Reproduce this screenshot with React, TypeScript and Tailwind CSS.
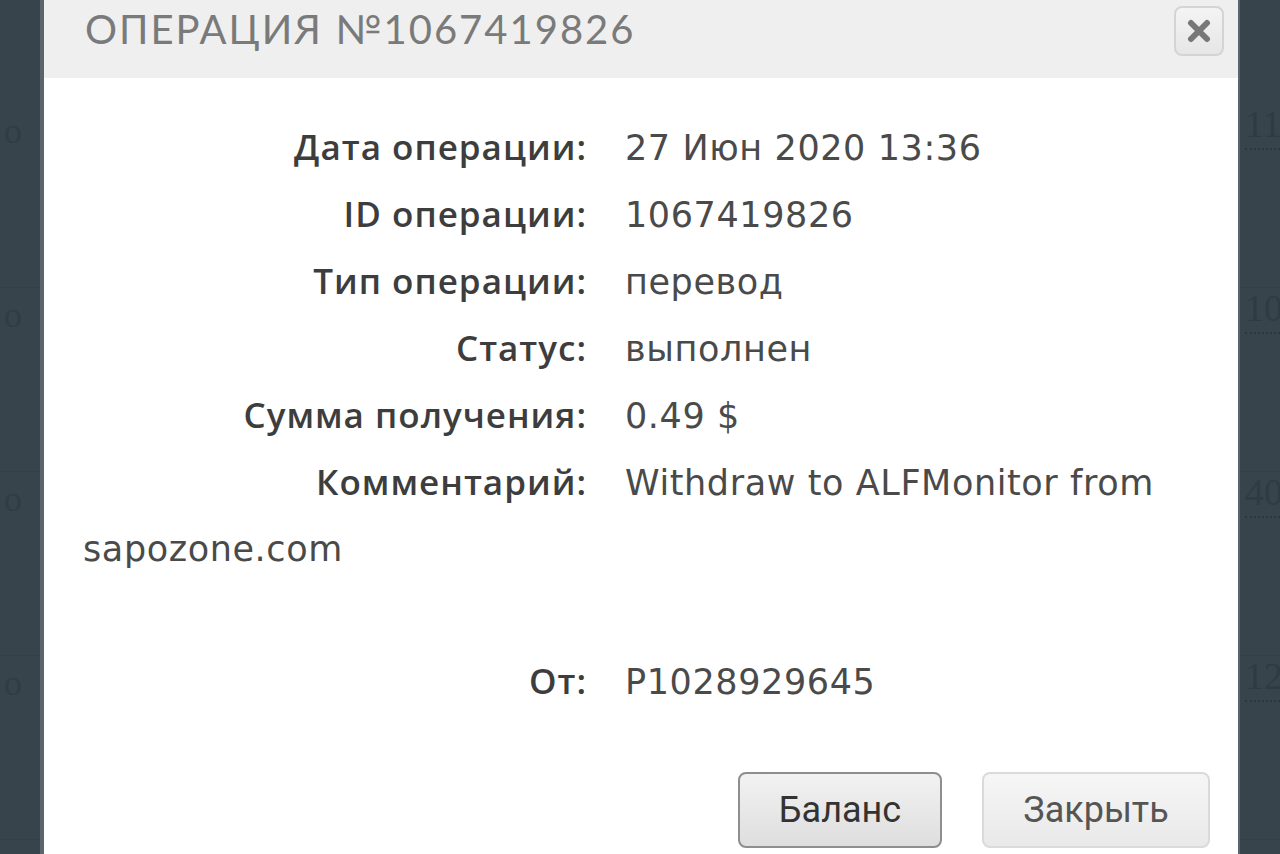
import React from 'react';

const rows: { label: string; value: string }[] = [
  { label: 'Дата операции:', value: '27 Июн 2020 13:36' },
  { label: 'ID операции:', value: '1067419826' },
  { label: 'Тип операции:', value: 'перевод' },
  { label: 'Статус:', value: 'выполнен' },
  { label: 'Сумма получения:', value: '0.49 $' },
];

const bgRows = ['114', '10', '40', '12'];

function CloseIcon() {
  return (
    <svg width="24" height="24" viewBox="0 0 24 24">
      <path d="M4 4 L20 20 M20 4 L4 20" stroke="#777" strokeWidth="6" strokeLinecap="round" />
    </svg>
  );
}

function Row({ label, children }: { label: string; children: React.ReactNode }) {
  return (
    <div>
      <span
        className="inline-block w-[504px] text-right text-[35px] font-semibold tracking-[1px] text-[#3d3d3d]"
        style={{ fontFamily: '"Open Sans", sans-serif' }}
      >
        {label}
      </span>
      <span className="ml-[38px]">{children}</span>
    </div>
  );
}

export default function App() {
  return (
    <div className="relative h-[854px] w-[1280px] overflow-hidden bg-[#37444c]">
      {/* page behind the overlay */}
      <div className="flex flex-col pt-[104px]" style={{ fontFamily: '"Liberation Serif", serif' }}>
        {bgRows.map((n, i) => (
          <div key={i} className="flex h-[184px] items-start justify-between border-b border-[#34414a] pl-1">
            <span className="text-[36px] text-[#313c43]">o</span>
            <span className="w-[35px] overflow-hidden whitespace-nowrap border-b-2 border-dotted border-[#2c363c] pb-1 text-[38px] leading-[40px] text-[#303b41]">
              {n}
            </span>
          </div>
        ))}
      </div>

      {/* modal */}
      <div className="absolute left-[40px] top-0 flex h-[854px] w-[1200px] flex-col border-l-4 border-r-2 border-[#5b666c] bg-white">
        <div className="flex h-[78px] items-start justify-between bg-[#efefef] pl-[41px] pr-[14px]">
          <h2
            className="mt-[5px] text-[40px] leading-[48px] tracking-[2px] text-[#7a7a7a]"
            style={{ fontFamily: 'Lato, sans-serif' }}
          >
            ОПЕРАЦИЯ №1067419826
          </h2>
          <button className="mt-[6px] flex h-[50px] w-[50px] items-center justify-center rounded-[8px] border-2 border-[#d4d4d4] bg-gradient-to-b from-[#f4f4f4] to-[#e6e6e6]">
            <CloseIcon />
          </button>
        </div>

        <div
          className="pl-[39px] pr-[40px] pt-[36px] text-[35px] leading-[66px] tracking-[0.6px] text-[#4a4a4a]"
          style={{ fontFamily: '"DejaVu Sans", sans-serif' }}
        >
          {rows.map((r) => (
            <Row key={r.label} label={r.label}>
              {r.value}
            </Row>
          ))}
          <Row label="Комментарий:">Withdraw to ALFMonitor from sapozone.com</Row>
          <div className="h-[66px]" />
          <Row label="От:">P1028929645</Row>
        </div>

        <div className="mt-[57px] flex justify-end gap-[40px] pr-[28px]" style={{ fontFamily: 'Roboto, sans-serif' }}>
          <button className="h-[76px] w-[204px] rounded-[8px] border-2 border-[#8e8e8e] bg-gradient-to-b from-[#f2f2f2] to-[#dedede] text-[36px] text-[#333]">
            Баланс
          </button>
          <button className="h-[76px] w-[228px] rounded-[8px] border-2 border-[#dadada] bg-gradient-to-b from-[#f6f6f6] to-[#e9e9e9] text-[36px] text-[#555]">
            Закрыть
          </button>
        </div>
      </div>
    </div>
  );
}
